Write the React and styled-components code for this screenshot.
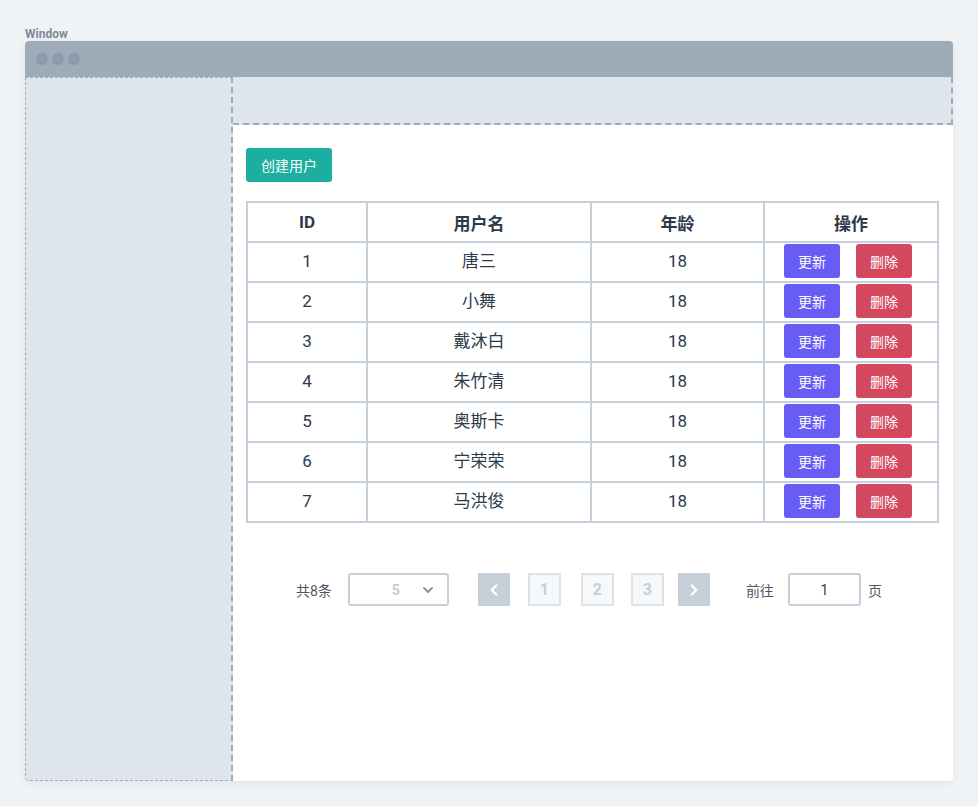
import styled, { createGlobalStyle } from "styled-components";
import { ChevronDown, ChevronLeft, ChevronRight } from "lucide-react";

const users = [
  { id: 1, name: "唐三", age: 18 },
  { id: 2, name: "小舞", age: 18 },
  { id: 3, name: "戴沐白", age: 18 },
  { id: 4, name: "朱竹清", age: 18 },
  { id: 5, name: "奥斯卡", age: 18 },
  { id: 6, name: "宁荣荣", age: 18 },
  { id: 7, name: "马洪俊", age: 18 },
];

const GlobalStyle = createGlobalStyle`
  body {
    margin: 0;
    background: #eff3f6;
    font-family: Roboto, "Noto Sans CJK SC", sans-serif;
  }
`;

export default function App() {
  return (
    <>
      <GlobalStyle />
      <Page>
        <Label>Window</Label>
        <Window>
          <TitleBar>
            <Dot />
            <Dot />
            <Dot />
          </TitleBar>
          <Body>
            <Sidebar />
            <Right>
              <Header />
              <Main>
                <CreateBtn>创建用户</CreateBtn>
                <Table>
                  <colgroup>
                    <col style={{ width: 120 }} />
                    <col style={{ width: 224 }} />
                    <col style={{ width: 173 }} />
                    <col style={{ width: 174 }} />
                  </colgroup>
                  <thead>
                    <tr>
                      <Th>ID</Th>
                      <Th>用户名</Th>
                      <Th>年龄</Th>
                      <Th>操作</Th>
                    </tr>
                  </thead>
                  <tbody>
                    {users.map((u) => (
                      <tr key={u.id}>
                        <Td>{u.id}</Td>
                        <Td>{u.name}</Td>
                        <Td>{u.age}</Td>
                        <Td>
                          <Actions>
                            <ActionBtn $color="#675cf4">更新</ActionBtn>
                            <ActionBtn $color="#d4485f">删除</ActionBtn>
                          </Actions>
                        </Td>
                      </tr>
                    ))}
                  </tbody>
                </Table>
                <Pager>
                  <PagerText>共8条</PagerText>
                  <Select>
                    <span>5</span>
                    <ChevronDown size={16} strokeWidth={3} color="#8795a3" />
                  </Select>
                  <NavBtn style={{ marginLeft: 29 }}>
                    <ChevronLeft size={18} strokeWidth={3} color="#fff" />
                  </NavBtn>
                  <PageNum style={{ marginLeft: 18 }}>1</PageNum>
                  <PageNum style={{ marginLeft: 20 }}>2</PageNum>
                  <PageNum style={{ marginLeft: 17 }}>3</PageNum>
                  <NavBtn style={{ marginLeft: 14 }}>
                    <ChevronRight size={18} strokeWidth={3} color="#fff" />
                  </NavBtn>
                  <PagerText style={{ marginLeft: 36 }}>前往</PagerText>
                  <JumpInput>1</JumpInput>
                  <PagerText style={{ marginLeft: 7 }}>页</PagerText>
                </Pager>
              </Main>
            </Right>
          </Body>
        </Window>
      </Page>
    </>
  );
}

const Page = styled.div`
  padding: 27px 25px 25px 25px;
  width: 928px;
`;

const Label = styled.div`
  font-size: 12px;
  font-weight: 700;
  color: #7d8a97;
  line-height: 14px;
`;

const Window = styled.div`
  width: 928px;
  height: 740px;
  display: flex;
  flex-direction: column;
  border-radius: 4px;
  overflow: hidden;
  background: #fff;
  box-shadow: 0 2px 8px rgba(0, 0, 0, 0.06);
`;

const TitleBar = styled.div`
  height: 36px;
  flex-shrink: 0;
  background: #9eacb9;
  display: flex;
  align-items: center;
  gap: 4px;
  padding-left: 11px;
`;

const Dot = styled.span`
  width: 12px;
  height: 12px;
  border-radius: 50%;
  background: #8b9baa;
`;

const Body = styled.div`
  flex: 1;
  display: flex;
  min-height: 0;
`;

const Sidebar = styled.div`
  width: 208px;
  flex-shrink: 0;
  box-sizing: border-box;
  background: #dfe5ed;
  border: 1px dashed #9eacb9;
  border-right: 2px dashed #9eacb9;
`;

const Right = styled.div`
  flex: 1;
  display: flex;
  flex-direction: column;
`;

const Header = styled.div`
  height: 48px;
  box-sizing: border-box;
  background: #dfe5ed;
  border-bottom: 2px dashed #9eacb9;
  border-right: 2px dashed #9eacb9;
`;

const Main = styled.div`
  flex: 1;
  padding: 23px 14px 0 13px;
`;

const CreateBtn = styled.button`
  height: 34px;
  width: 86px;
  border: none;
  border-radius: 3px;
  background: #1aaf9e;
  color: #fff;
  font-family: inherit;
  font-size: 14px;
  cursor: pointer;
`;

const Table = styled.table`
  margin-top: 19px;
  width: 691px;
  table-layout: fixed;
  border-collapse: collapse;
  border: 2px solid #c5d0da;
  color: #2d3a48;
`;

const Th = styled.th`
  height: 38px;
  border: 2px solid #c5d0da;
  font-size: 17px;
  font-weight: 700;
  padding: 0;
`;

const Td = styled.td`
  height: 36px;
  border: 2px solid #c5d0da;
  font-size: 17px;
  line-height: 20px;
  text-align: center;
  padding: 0 0 2px;
`;

const Actions = styled.div`
  display: flex;
  gap: 16px;
  padding-left: 19px;
`;

const ActionBtn = styled.button`
  width: 56px;
  height: 34px;
  border: none;
  border-radius: 3px;
  background: ${(p) => p.$color};
  color: #fff;
  font-family: inherit;
  font-size: 14px;
  padding: 0;
  cursor: pointer;
`;

const Pager = styled.div`
  margin-top: 50px;
  display: flex;
  align-items: center;
  padding-left: 50px;
`;

const PagerText = styled.span`
  font-size: 14px;
  color: #4a5663;
`;

const Select = styled.div`
  margin-left: 16px;
  width: 101px;
  height: 33px;
  box-sizing: border-box;
  border: 2px solid #c5d0da;
  border-radius: 3px;
  display: flex;
  align-items: center;
  justify-content: flex-end;
  gap: 20px;
  padding-right: 11px;
  font-size: 14px;
  font-weight: 700;
  color: #c3ccd6;
`;

const NavBtn = styled.div`
  width: 32px;
  height: 33px;
  background: #c5d0da;
  display: flex;
  align-items: center;
  justify-content: center;
`;

const PageNum = styled.div`
  width: 33px;
  height: 33px;
  box-sizing: border-box;
  border: 2px solid #dbe2e9;
  background: #f6f8fa;
  display: flex;
  align-items: center;
  justify-content: center;
  font-size: 16px;
  font-weight: 700;
  color: #c5d0da;
`;

const JumpInput = styled.div`
  margin-left: 14px;
  width: 73px;
  height: 33px;
  box-sizing: border-box;
  border: 2px solid #c5d0da;
  border-radius: 3px;
  display: flex;
  align-items: center;
  justify-content: center;
  font-size: 14px;
  color: #2d3a48;
`;
